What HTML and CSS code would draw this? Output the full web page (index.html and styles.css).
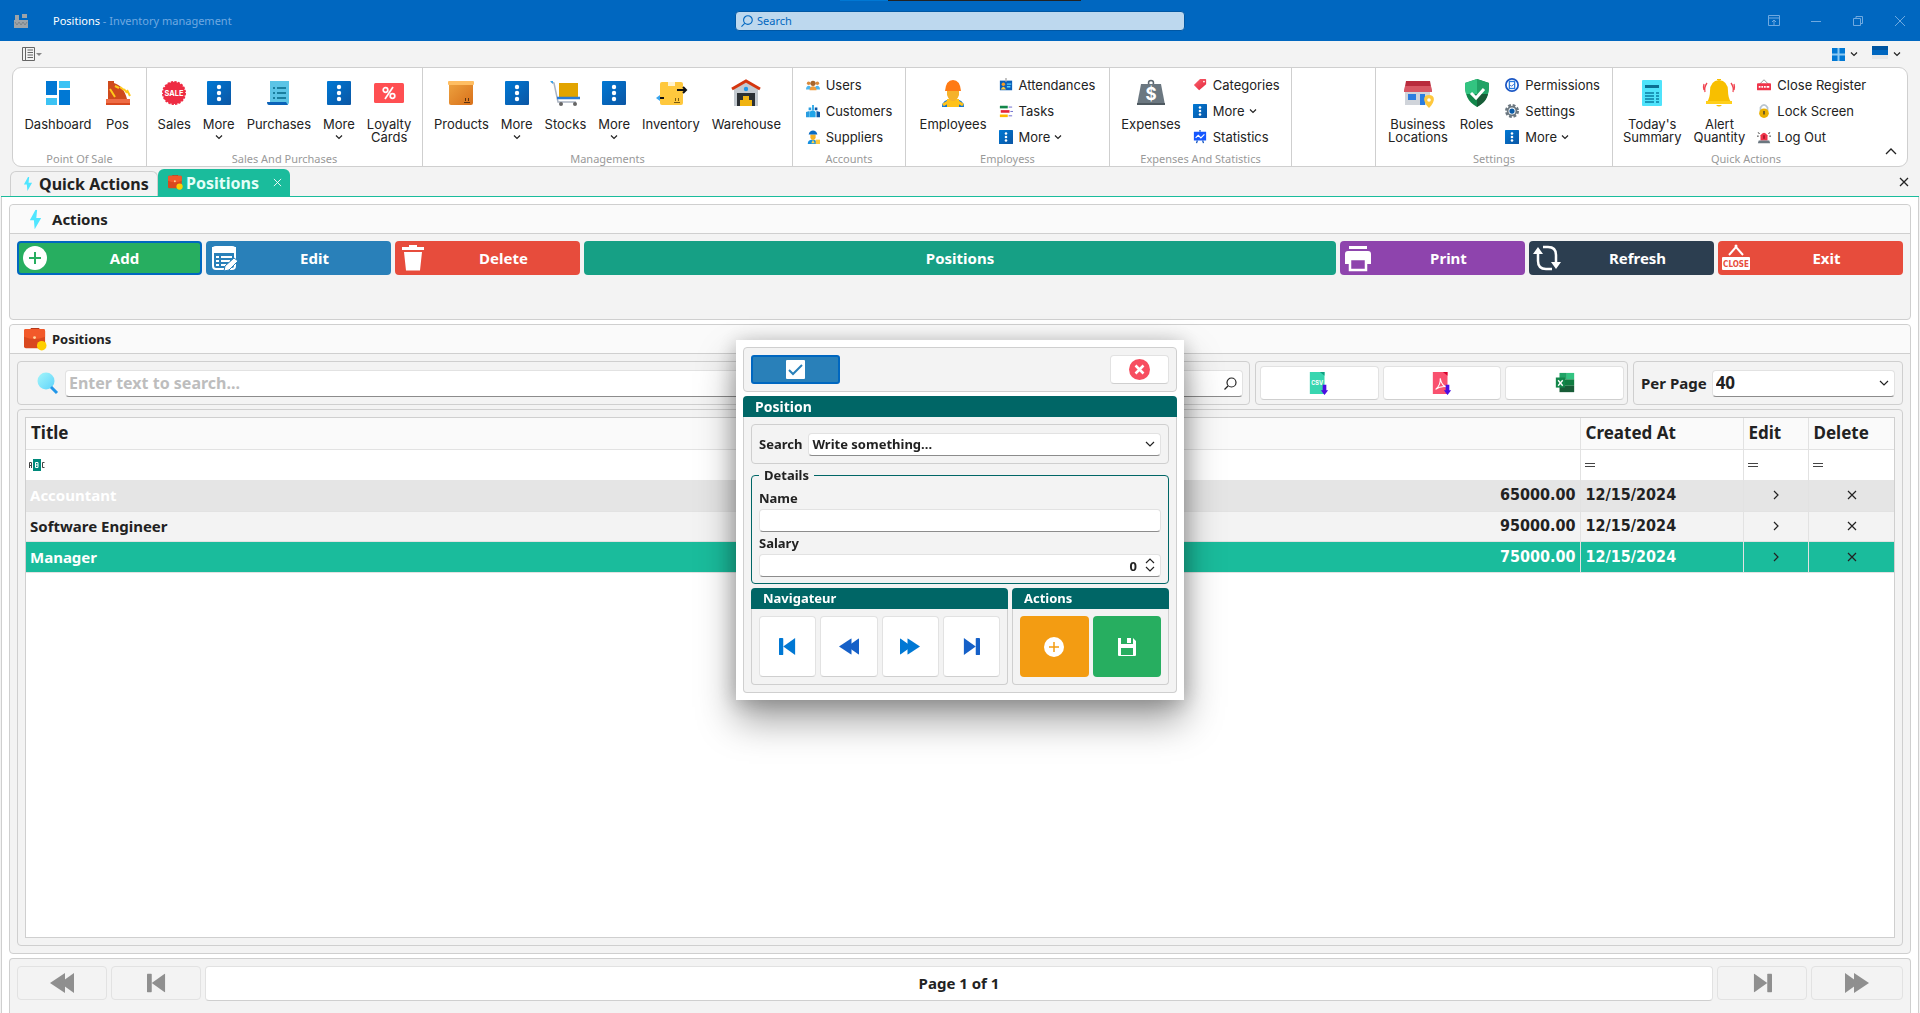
FILE: index.html
```html
<!DOCTYPE html>
<html lang="en">
<head>
<meta charset="utf-8">
<title>Positions - Inventory management</title>
<link rel="stylesheet" href="styles.css">
</head>
<body>
<svg class="defs" aria-hidden="true">
  <defs>
    <linearGradient id="gBlue" x1="0" y1="0" x2="1" y2="1"><stop offset="0" stop-color="#0078d4"/><stop offset="1" stop-color="#0b56a4"/></linearGradient>
    <linearGradient id="gBox" x1="0" y1="0" x2="1" y2="1"><stop offset="0" stop-color="#eda23f"/><stop offset="1" stop-color="#d8701a"/></linearGradient>
    <linearGradient id="gLens" x1="0" y1="0" x2="1" y2="1"><stop offset="0" stop-color="#a5f6fa"/><stop offset="1" stop-color="#5fd3fb"/></linearGradient>
    <linearGradient id="gTag" x1="0" y1="0" x2="1" y2="1"><stop offset="0" stop-color="#f9656f"/><stop offset="1" stop-color="#e5233a"/></linearGradient>
  </defs>
  <symbol id="more" viewBox="0 0 24 24"><rect width="24" height="24" rx="1" fill="url(#gBlue)"/><g fill="#fff"><circle cx="12" cy="6" r="2.2"/><circle cx="12" cy="12" r="2.2"/><circle cx="12" cy="18" r="2.2"/></g></symbol>
  <symbol id="chev" viewBox="0 0 8 6"><path d="M1 1.5l3 3 3-3" fill="none" stroke="#222" stroke-width="1.2"/></symbol>
  <symbol id="bolt" viewBox="0 0 16 24"><path d="M8 0L1 13h5l1 11 8-14H9l1-10z" fill="#50e6ff"/></symbol>
  <symbol id="case" viewBox="0 0 24 24"><path d="M8 2V0h7v2" fill="none" stroke="#b5381a" stroke-width="2"/><rect y="1" width="22" height="20" rx="2" fill="#d9481f"/><path d="M0 3q0-2 2-2h18q2 0 2 2v6q-11 5-22 0z" fill="#f2592a"/><circle cx="11" cy="10" r="1.5" fill="#ffd9a0"/><circle cx="18.500" cy="18.500" r="5" fill="#ffcf00"/></symbol>
  <symbol id="first" viewBox="0 0 20 20"><rect y="0" width="5" height="20" rx="1"/><path d="M19 0v20L5 10z" stroke-width="1" stroke-linejoin="round"/></symbol>
  <symbol id="back" viewBox="0 0 24 20"><path d="M15 0v20L0 10z"/><path d="M24 0v20L10 10z"/></symbol>
</svg>

<header class="titlebar">
  <svg class="app-icon" viewBox="0 0 14 14"><path d="M0 6h14v8H0zM1 1h4v5H1zM8 0h5v4H8z" fill="#9da3a8"/><path d="M1 8l2 3 2-3 2 3 2-3 2 3 2-3" fill="none" stroke="#7c858c"/></svg>
  <div class="win-title"><b>Positions</b> - Inventory management</div>
  <label class="top-search">
    <svg viewBox="0 0 13 13"><circle cx="7.500" cy="5.500" r="4.700" fill="none" stroke="#0067c0" stroke-width="1.200"/><path d="M4 9L.5 12.500" stroke="#0067c0" stroke-width="1.200"/></svg>
    <input type="text" placeholder="Search" aria-label="Search">
  </label>
  <div class="win-buttons">
    <button aria-label="Pin"><svg viewBox="0 0 12 12"><path d="M.5.5h11v10H.5zM.5 3h11M6 10V5M4 7l2-2 2 2"/></svg></button>
    <button aria-label="Minimize"><svg viewBox="0 0 12 12"><path d="M1 6.500h10"/></svg></button>
    <button aria-label="Restore"><svg viewBox="0 0 12 12"><path d="M1.500 3.500h7v7h-7zM4 3.500v-2h6.500v7h-2"/></svg></button>
    <button aria-label="Close"><svg viewBox="0 0 12 12"><path d="M1 1l10 10M11 1L1 11"/></svg></button>
  </div>
  <div class="screen-strip"></div>
</header>

<div class="quickbar">
  <button aria-label="Toolbar options"><svg width="20" height="14" viewBox="0 0 20 14"><path d="M.5.5h12v13H.5zM3.500.5v13M5.500 3h5.500M5.500 5.500h5.500M5.500 8h5.500M5.500 10.500h5.500" fill="none" stroke="#666"/><path d="M14 6h6l-3 3z" fill="#888"/></svg></button>
  <div class="quick-right">
    <button aria-label="Layout"><svg width="13" height="13" viewBox="0 0 13 13"><path d="M0 0h13v13H0z" fill="#0078d4"/><path d="M6.500 0v13M0 6.500h13" stroke="#8cc9f2" stroke-width="2"/></svg><svg width="8" height="6"><use href="#chev"/></svg></button>
    <button aria-label="Theme"><svg class="raised" width="16" height="13" viewBox="0 0 16 13"><path d="M0 0h16v5H0z" fill="#0054a0"/><path d="M0 4h16v5H0z" fill="#0067c0"/><path d="M0 9h16v4H0z" fill="#e8e8e8"/></svg><svg width="8" height="6"><use href="#chev"/></svg></button>
  </div>
</div>

<nav class="ribbon">
  <section class="group g-pos"><div class="tools">
    <button class="big"><svg viewBox="0 0 24 24"><path d="M0 0h11v14H0zM13 9h11v15H13z" fill="#0078d4"/><path d="M13 0h11v7H13zM0 17h11v7H0z" fill="#3cc3f4"/></svg>Dashboard</button>
    <button class="big"><svg viewBox="0 0 24 24"><path d="M2 0h6v2c7 2 11 8 13 16H2z" fill="#cf4a1c"/><rect y="18" width="24" height="6" fill="#ee6c45"/><path d="M0 22h24v2H0z" fill="#d9481f"/><path d="M4 8l5 8M9 5l4 2m1-1l4 3m0-1l3 4m0-3l3 6" stroke="#ffca1a" stroke-width="2"/></svg>Pos</button>
  </div><h2>Point Of Sale</h2></section>

  <section class="group g-sales"><div class="tools">
    <button class="big"><svg viewBox="0 0 26 26"><circle cx="13" cy="13" r="12" fill="#ee2c43" stroke="#ee2c43" stroke-width="2" stroke-dasharray="2.500 1.270"/><text x="13" y="16" text-anchor="middle" class="sale-text">SALE</text></svg>Sales</button>
    <button class="big"><svg><use href="#more"/></svg>More<svg class="chev"><use href="#chev"/></svg></button>
    <button class="big"><svg viewBox="0 0 24 24"><path d="M3 0h19v21q0 3-3 3H5q-2 0-2-3z" fill="#5cc4e6"/><path d="M0 21h19l2 3H2q-2 0-2-3z" fill="#0b62b8"/><path d="M6 7h2m2 0h9M6 12h2m2 0h9M6 17h2m2 0h9" stroke="#1b7f9f" stroke-width="2"/></svg>Purchases</button>
    <button class="big"><svg><use href="#more"/></svg>More<svg class="chev"><use href="#chev"/></svg></button>
    <button class="big"><svg viewBox="0 0 24 24" class="wide"><rect x="-3" y="2" width="30" height="20" rx="1.500" fill="#ff4f52"/><g fill="none" stroke="#fff" stroke-width="1.700"><circle cx="8.500" cy="9" r="2.300"/><circle cx="15.500" cy="15" r="2.300"/><path d="M16 6L8 18"/></g></svg>Loyalty<br>Cards</button>
  </div><h2>Sales And Purchases</h2></section>

  <section class="group g-manage"><div class="tools">
    <button class="big"><svg viewBox="0 0 24 24"><path d="M0 2h24v20q0 2-2 2H2q-2 0-2-2z" fill="url(#gBox)"/><rect x="-1" width="26" height="4" rx="1" fill="#ffbe62"/><path d="M15 21.500h6M16.500 20v-3M19.500 20v-3" stroke="#5b3210"/></svg>Products</button>
    <button class="big"><svg><use href="#more"/></svg>More<svg class="chev"><use href="#chev"/></svg></button>
    <button class="big"><svg class="wide" viewBox="0 0 24 24"><path d="M-2 1l3 1 4 19h18" fill="none" stroke="#aab4c2" stroke-width="1.500"/><path d="M-3 0h3v3z" fill="#3aa5ee"/><rect x="6" y="2" width="19" height="14" fill="#e2a400"/><path d="M4 17h23" stroke="#2b7bd6" stroke-width="2.500"/><circle cx="8" cy="23" r="2" fill="#666"/><circle cx="22" cy="23" r="2" fill="#666"/></svg>Stocks</button>
    <button class="big"><svg><use href="#more"/></svg>More<svg class="chev"><use href="#chev"/></svg></button>
    <button class="big"><svg class="wide" viewBox="0 0 24 24"><rect x="1" y="1" width="23" height="23" rx="2" fill="#ffc83d"/><rect x="9" y="1" width="7" height="4" fill="#fff3d0"/><path d="M15 21.500h6M16.500 20v-3M19.500 20v-3" stroke="#7a5a10"/><path d="M18 9h9m-3-3l3 3-3 3M5 17h-5" fill="none" stroke="#111" stroke-width="2"/><path d="M1 14l-4 3 4 3z" fill="#3aa5ee"/></svg>Inventory</button>
    <button class="big"><svg class="wide" viewBox="0 0 24 24"><path d="M0 8l12-7 12 7v17H0z" fill="#c3c9cf"/><path d="M3 12h18v13H3z" fill="#2b3034"/><path d="M-2 8l14-8 14 8" fill="none" stroke="#d5360f" stroke-width="3"/><circle cx="12" cy="8" r="2.200" fill="#2196e8"/><path d="M9 15h6v4h3v6H6v-6h3z" fill="#f0b310"/></svg>Warehouse</button>
  </div><h2>Managements</h2></section>

  <section class="group g-accounts"><div class="tools"><div class="stack">
    <button class="small"><svg viewBox="0 0 16 16"><circle cx="3" cy="6" r="2" fill="#d98a3d"/><circle cx="13" cy="6" r="2" fill="#d98a3d"/><path d="M0 13c0-6 6-5 6-1h4c0-4 6-5 6 1z" fill="#4db6ee"/><circle cx="8" cy="6" r="3" fill="#a8652b"/><path d="M4 14c0-6 8-6 8 0z" fill="#ef9b3c"/></svg>Users</button>
    <button class="small"><svg viewBox="0 0 16 16"><path d="M0 15V9l4-1v7zM3 4h3v3H3z" fill="#2a9de0"/><path d="M16 15V9l-4-1v7zM10 4h3v3h-3z" fill="#0b56a4"/><path d="M4 15V9q4-3 7 0v6zM7 1h2v6H7z" fill="#20a4e8"/></svg>Customers</button>
    <button class="small"><svg viewBox="0 0 16 16"><path d="M2 16c0-5 4-5 6-5s5 1 5 5z" fill="#168fe0"/><path d="M5 5h6v4q-3 5-6 0z" fill="#f7b223"/><path d="M3 5c1-6 9-6 10 0z" fill="#0a6cc4"/><path d="M8 11l-2 4h4z" fill="#ffd54a"/><path d="M11 11h5v5h-5z" fill="#ffc83d"/></svg>Suppliers</button>
  </div></div><h2>Accounts</h2></section>

  <section class="group g-employees"><div class="tools">
    <button class="big"><svg viewBox="0 0 24 24" class="wide"><path d="M1 26q0-8 11-8t11 8z" fill="#1275cc"/><path d="M6 18h12v8H6z" fill="#ffc21a"/><path d="M6 9h12v5q-2 6-6 6t-6-6z" fill="#f5b22b"/><path d="M4 10Q5-1 12-1t8 11z" fill="#ff7a14"/><path d="M2 24l5-3m15 3l-5-3" stroke="#ffc21a" stroke-width="3"/></svg>Employees</button>
    <div class="stack">
    <button class="small"><svg viewBox="0 0 16 16"><rect x="1" y="3" width="14" height="11" fill="#0b5fb8"/><rect x="7" y="0" width="2" height="4" fill="#bbb"/><circle cx="5" cy="7" r="2" fill="#f59a23"/><path d="M2 13q3-6 6 0z" fill="#ffc83d"/><path d="M9 7h5M9 10h4" stroke="#5bd1ff" stroke-width="1.500"/></svg>Attendances</button>
    <button class="small"><svg viewBox="0 0 16 16"><path d="M1 2h9v3H1z" fill="#12864a"/><path d="M2 7h10v3H2z" fill="#e5233a"/><path d="M1 12h9v3H1z" fill="#ffb900"/><path d="M11 3.500h4M13 8.500h3M11 13.500h4" stroke="#5b5bc8"/></svg>Tasks</button>
    <button class="small"><svg><use href="#more"/></svg>More<svg class="chev"><use href="#chev"/></svg></button>
  </div></div><h2>Employess</h2></section>

  <section class="group g-expenses"><div class="tools">
    <button class="big"><svg viewBox="0 0 24 24" class="wide"><circle cx="12" cy="2" r="2.500" fill="none" stroke="#5c6770" stroke-width="1.500"/><path d="M2 3h20l4 21H-2z" fill="#6b7780"/><path d="M-2 22h28v2H-2z" fill="#4e5960"/><text x="12" y="19" text-anchor="middle" class="coin-text">$</text></svg>Expenses</button>
    <div class="stack">
    <button class="small"><svg viewBox="0 0 16 16"><path d="M8 1h6q1 0 1 1v5l-8 7-6-6z" fill="url(#gTag)"/><circle cx="12.500" cy="4" r="1" fill="#fff"/></svg>Categories</button>
    <button class="small"><svg><use href="#more"/></svg>More<svg class="chev"><use href="#chev"/></svg></button>
    <button class="small"><svg viewBox="0 0 16 16"><path d="M1 2h14v10H1z" fill="#1557ff"/><path d="M3 9l3-3 3 3 4-4" fill="none" stroke="#fff" stroke-width="1.300"/><path d="M8 0v2M5 12l-1 3M11 12l1 3" stroke="#1557c0" stroke-width="1.500"/></svg>Statistics</button>
  </div></div><h2>Expenses And Statistics</h2></section>

  <section class="group g-spare"></section>

  <section class="group g-settings"><div class="tools">
    <button class="big"><svg viewBox="0 0 24 24" class="wide"><path d="M-1 11h25v13H-1z" fill="#d0d4da"/><path d="M0 0h24l2 11H-2z" fill="#b92b3d"/><path d="M-1 5h26l1 6H-2z" fill="#d85764"/><path d="M2 13h8v6H2zM14 13h5v11h-5z" fill="#2b7de0"/><path d="M23 14c6 0 7 6 0 13-7-7-6-13 0-13z" fill="#ffc83d"/><circle cx="23" cy="19" r="1.800" fill="#fff"/></svg>Business<br>Locations</button>
    <button class="big"><svg viewBox="0 0 24 24" class="wide"><path d="M12-2l12 4c0 12-2 18-12 24C2 20 0 14 0 2z" fill="#12864a"/><path d="M12-2v15H1C0 9 0 6 0 2z" fill="#33c481"/><path d="M12-2l12 4c0 4 0 8-1 11H12z" fill="#21a366"/><path d="M12 13h11c-1 5-4 9-11 13z" fill="#185c37"/><path d="M6 12l5 5 8-9" fill="none" stroke="#fff" stroke-width="3"/></svg>Roles</button>
    <div class="stack">
    <button class="small"><svg viewBox="0 0 16 16"><circle cx="8" cy="8" r="7" fill="#fff" stroke="#1a56c4" stroke-width="2"/><rect x="5" y="4" width="6" height="8" fill="none" stroke="#2b7de0" stroke-width="1.500"/><path d="M6 8l1.500 1.500L10 7" fill="none" stroke="#1a56c4"/></svg>Permissions</button>
    <button class="small"><svg viewBox="0 0 16 16"><circle cx="8" cy="8" r="6.500" fill="none" stroke="#6b7780" stroke-width="3" stroke-dasharray="3.100 2"/><circle cx="8" cy="8" r="5" fill="#fff" stroke="#6b7780" stroke-width="2"/><circle cx="8" cy="8" r="3" fill="#0a5ca8"/></svg>Settings</button>
    <button class="small"><svg><use href="#more"/></svg>More<svg class="chev"><use href="#chev"/></svg></button>
  </div></div><h2>Settings</h2></section>

  <section class="group g-quick"><div class="tools">
    <button class="big"><svg viewBox="0 0 24 24" class="wide"><rect x="2" y="-1" width="20" height="26" rx="1" fill="#4fe3fb"/><path d="M5 5.500h14" stroke="#0b6f93" stroke-width="3"/><path d="M5 12h9m2 0h3M5 15h9m2 0h3M5 18h9m2 0h3M5 21h9m2 0h3" stroke="#0b7fa5" stroke-width="1.300"/></svg>Today's<br>Summary</button>
    <button class="big"><svg viewBox="0 0 24 24" class="wide"><path d="M0 21Q3 17 3 10 3 0 12-1q9 1 9 11 0 7 3 11z" fill="#f8bf00"/><path d="M-1 20h26v3H-1z" fill="#ffcf1a"/><path d="M10-1h4v-1h-4zM9 24h6q-3 3-6 0z" fill="#f8bf00"/><path d="M0 2q-3 4-2 9M-3 3q-1 3 0 6M24 2q3 4 2 9M27 3q1 3 0 6" fill="none" stroke="#f04450" stroke-width="1.300"/></svg>Alert<br>Quantity</button>
    <div class="stack">
    <button class="small"><svg viewBox="0 0 16 16"><path d="M3 7l5-5 5 5" fill="none" stroke="#888"/><rect x="0" y="6" width="16" height="8" rx="1" fill="#f0344a"/><path d="M2 10h2m1 0h2m1 0h2m1 0h3" stroke="#fff" stroke-width="2"/></svg>Close Register</button>
    <button class="small"><svg viewBox="0 0 16 16"><path d="M4 8V4q4-6 8 0v4" fill="none" stroke="#b8c4cf" stroke-width="2"/><circle cx="8" cy="10.500" r="5.500" fill="#eab000"/><path d="M8 8v4" stroke="#333" stroke-width="1.500"/></svg>Lock Screen</button>
    <button class="small"><svg viewBox="0 0 16 16"><path d="M4 12V6q4-6 8 0v6z" fill="#f0344a"/><path d="M8 6v4" stroke="#8a1020" stroke-width="1.500"/><path d="M2 12h12l1 3H1z" fill="#6b7780"/><path d="M1 3l2 1M0 7h2M15 3l-2 1M16 7h-2" stroke="#222"/></svg>Log Out</button>
  </div></div><h2>Quick Actions</h2>
  <button class="collapse" aria-label="Collapse ribbon"><svg viewBox="0 0 12 8"><path d="M1 7l5-5 5 5" fill="none" stroke="#222" stroke-width="1.300"/></svg></button></section>
</nav>

<div class="tabs">
  <a class="tab" href="#quick"><svg viewBox="0 0 16 24"><use href="#bolt"/></svg>Quick Actions</a>
  <a class="tab active" href="#positions"><svg class="case" viewBox="0 0 24 24"><use href="#case"/></svg>Positions<svg class="x" viewBox="0 0 10 10"><path d="M1 1l8 8M9 1L1 9" stroke="#fff"/></svg></a>
  <button class="tabs-close" aria-label="Close tab"><svg viewBox="0 0 10 10"><path d="M1 1l8 8M9 1L1 9" stroke="#222" stroke-width="1.300"/></svg></button>
</div>

<main class="page">
  <section class="panel actions-panel">
    <h1 class="panel-head actions-title"><svg class="bolt" viewBox="0 0 16 24"><use href="#bolt"/></svg>Actions</h1>
    <div class="action-row">
      <button class="act add"><svg viewBox="0 0 28 28"><circle cx="14" cy="14" r="12" fill="#fff"/><path d="M14 8v12M8 14h12" stroke="#27ae60" stroke-width="2"/></svg><span>Add</span></button>
      <button class="act edit"><svg viewBox="0 0 28 28"><rect x="3" y="3" width="22" height="22" rx="3" fill="none" stroke="#fff" stroke-width="2"/><path d="M2 3h24v6H2z" fill="#fff"/><path d="M6 13h3m2 0h11M6 17h3m2 0h9M6 21h3m2 0h5" stroke="#fff" stroke-width="2"/><path d="M14 27l1-5 9-8 4 3-9 9z" fill="#fff" stroke="#2980b9"/></svg><span>Edit</span></button>
      <button class="act delete"><svg viewBox="0 0 28 28"><path d="M5 8h18l-2 18.500H7zM3 3h7V1h8v2h7v3H3z" fill="#fff"/></svg><span>Delete</span></button>
      <button class="act current"><span>Positions</span></button>
      <button class="act print"><svg viewBox="0 0 28 28"><path d="M5 2h18v3H5zM4 7h20q3 0 3 3v10h-4v-6H5v6H1V10q0-3 3-3z" fill="#fff"/><rect x="6" y="15" width="16" height="11" fill="none" stroke="#fff" stroke-width="2.500"/></svg><span>Print</span></button>
      <button class="act refresh"><svg viewBox="0 0 28 28"><path d="M19 25h-6Q5 25 5 17V9M10 3h5q8 0 8 8v8" fill="none" stroke="#fff" stroke-width="2.500"/><path d="M0 10l5-7 5 7zM18 18h10l-5 7z" fill="#fff"/></svg><span>Refresh</span></button>
      <button class="act exit"><svg viewBox="0 0 28 28"><path d="M7 11l7-8 7 8" fill="none" stroke="#fff" stroke-width="2"/><circle cx="14" cy="2" r="1.500" fill="#fff"/><rect y="13" width="28" height="13" rx="1" fill="#fff"/><text x="14" y="23" text-anchor="middle" class="close-text">CLOSE</text></svg><span>Exit</span></button>
    </div>
  </section>

  <section class="panel list-panel">
    <h2 class="panel-head"><svg class="case" viewBox="0 0 24 24"><use href="#case"/></svg>Positions</h2>
    <div class="list-body">
      <div class="filters">
        <div class="box searchbox">
          <svg viewBox="0 0 22 22"><circle cx="9" cy="9" r="8.500" fill="url(#gLens)"/><path d="M14 15l6 6" stroke="#2196e8" stroke-width="3"/></svg>
          <input class="field" type="text" placeholder="Enter text to search..." aria-label="Search positions">
          <svg class="glass" viewBox="0 0 13 13"><circle cx="7.500" cy="5.500" r="4.500" fill="none" stroke="#222" stroke-width="1.200"/><path d="M4 9L.5 12.500" stroke="#222" stroke-width="1.200"/></svg>
        </div>
        <div class="box exports">
          <button class="white" aria-label="Export CSV"><svg viewBox="0 0 24 24"><path d="M2 0h16v24H2z" fill="#38d6b0"/><path d="M13 0h5v4z" fill="#0f9f80"/><text x="10" y="14" text-anchor="middle" class="csv-text">CSV</text><path d="M16 14h4v6h2l-4 5-4-5h2z" fill="#4b0ee0"/></svg></button>
          <button class="white" aria-label="Export PDF"><svg viewBox="0 0 24 24"><path d="M2 0h16v24H2z" fill="#f9516f"/><path d="M13 0h5v4z" fill="#d8002c"/><path d="M5 19q6-5 5-12 2 9 7 9-7-1-12 3z" fill="none" stroke="#fff" stroke-width="1.200"/><path d="M16 14h4v6h2l-4 5-4-5h2z" fill="#4b0ee0"/></svg></button>
          <button class="white" aria-label="Export Excel"><svg viewBox="0 0 24 24"><path d="M6 1h8v7H6z" fill="#21a366"/><path d="M14 1h8v7h-8z" fill="#33c481"/><path d="M6 8h16v7H6z" fill="#107c41"/><path d="M6 15h16v7H6z" fill="#185c37"/><path d="M2 6h10v11H2z" fill="#12864a"/><path d="M4.500 9l5 6m0-6l-5 6" stroke="#fff" stroke-width="1.500"/></svg></button>
        </div>
        <div class="box perpage">
          <label for="pp">Per Page</label>
          <div class="select"><select class="field" id="pp"><option>40</option></select><svg viewBox="0 0 10 7"><path d="M1 1l4 4 4-4" fill="none" stroke="#222" stroke-width="1.200"/></svg></div>
        </div>
      </div>
      <div class="box grid-box">
        <div class="grid">
          <table>
            <colgroup><col><col><col class="c-date"><col class="c-edit"><col class="c-del"></colgroup>
            <thead><tr><th>Title</th><th></th><th>Created At</th><th>Edit</th><th>Delete</th></tr></thead>
            <tbody>
              <tr class="filter"><td><svg width="16" height="12" viewBox="0 0 16 12"><rect x="4" width="8" height="12" fill="#00897b"/><path d="M.5 9V3.500h2V9M.5 6.500h2M15.500 3.500h-2v5h2" fill="none" stroke="#444"/><path d="M6.500 3.500h2.500v5H6.500zM6.500 6h2.500" fill="none" stroke="#fff"/></svg></td><td></td><td><i></i></td><td><i></i></td><td><i></i></td></tr>
              <tr class="focused"><td>Accountant</td><td class="num">65000.00</td><td class="date">12/15/2024</td><td class="cmd"><button aria-label="Edit"><svg class="go"><path d="M1 1l4 4-4 4"/></svg></button></td><td class="cmd"><button aria-label="Delete"><svg><path d="M1 1l8 8M9 1L1 9"/></svg></button></td></tr>
              <tr class="alt"><td>Software Engineer</td><td class="num">95000.00</td><td class="date">12/15/2024</td><td class="cmd"><button aria-label="Edit"><svg class="go"><path d="M1 1l4 4-4 4"/></svg></button></td><td class="cmd"><button aria-label="Delete"><svg><path d="M1 1l8 8M9 1L1 9"/></svg></button></td></tr>
              <tr class="selected"><td>Manager</td><td class="num">75000.00</td><td class="date">12/15/2024</td><td class="cmd"><button aria-label="Edit"><svg class="go"><path d="M1 1l4 4-4 4"/></svg></button></td><td class="cmd"><button aria-label="Delete"><svg><path d="M1 1l8 8M9 1L1 9"/></svg></button></td></tr>
            </tbody>
          </table>
        </div>
      </div>
    </div>
  </section>

  <footer class="panel pager">
    <button disabled aria-label="First page"><svg class="w24" viewBox="0 0 24 20"><use href="#back"/></svg></button>
    <button disabled aria-label="Previous page"><svg viewBox="0 0 20 20"><use href="#first"/></svg></button>
    <output>Page 1 of 1</output>
    <button disabled aria-label="Next page"><svg class="flip" viewBox="0 0 20 20"><use href="#first"/></svg></button>
    <button disabled aria-label="Last page"><svg class="w24 flip" viewBox="0 0 24 20"><use href="#back"/></svg></button>
  </footer>
</main>

<dialog open class="modal" aria-label="Position">
  <div class="box modal-top">
    <button class="ok" aria-label="Confirm"><svg viewBox="0 0 19 19"><rect width="19" height="19" rx="1" fill="#fff"/><path d="M3 10l4 4 9-9" fill="none" stroke="#2980b9" stroke-width="2"/></svg></button>
    <button class="white cancel" aria-label="Close"><svg viewBox="0 0 21 21"><circle cx="10.500" cy="10.500" r="10.500" fill="#f74e60"/><path d="M6.500 6.500l8 8m0-8l-8 8" stroke="#fff" stroke-width="2.500"/></svg></button>
  </div>
  <section class="card">
    <h2 class="big-head">Position</h2>
    <div class="card-body">
      <div class="box lookup">
        <label for="ws">Search</label>
        <div class="select"><select class="field" id="ws"><option>Write something...</option></select><svg viewBox="0 0 10 7"><path d="M1 1l4 4 4-4" fill="none" stroke="#222" stroke-width="1.200"/></svg></div>
      </div>
      <fieldset>
        <legend>Details</legend>
        <label for="nm">Name</label>
        <input class="field" id="nm" type="text">
        <label for="sl">Salary</label>
        <div class="select"><input class="field salary" id="sl" type="text" value="0"><svg class="spin" viewBox="0 0 10 14"><path d="M1 5l4-4 4 4M1 9l4 4 4-4" fill="none" stroke="#222" stroke-width="1.200"/></svg></div>
      </fieldset>
      <div class="bottom">
        <section class="card nav">
          <h3>Navigateur</h3>
          <div class="card-body row">
            <button class="white" aria-label="First"><svg viewBox="0 0 20 20"><use href="#first"/></svg></button>
            <button class="white dark" aria-label="Previous"><svg class="w24" viewBox="0 0 24 20"><use href="#back"/></svg></button>
            <button class="white" aria-label="Next"><svg class="w24 flip" viewBox="0 0 24 20"><use href="#back"/></svg></button>
            <button class="white dark" aria-label="Last"><svg class="flip" viewBox="0 0 20 20"><use href="#first"/></svg></button>
          </div>
        </section>
        <section class="card acts">
          <h3>Actions</h3>
          <div class="card-body row">
            <button class="new" aria-label="New"><svg viewBox="0 0 20 20"><circle cx="10" cy="10" r="10" fill="#fff"/><path d="M10 5v10M5 10h10" stroke="#f39c12" stroke-width="1.500"/></svg></button>
            <button class="save" aria-label="Save"><svg viewBox="0 0 20 20"><path d="M1 1h3v6h12V1l3 3v14q0 1-1 1H2q-1 0-1-1z" fill="#fff"/><path d="M10 1h4v5h-4z" fill="#fff"/><path d="M4 11h12v7H4z" fill="#27ae60"/></svg></button>
          </div>
        </section>
      </div>
    </div>
  </section>
</dialog>
</body>
</html>
```
FILE: styles.css
```css
* { box-sizing: border-box; }
html, body { height: 100%; }
body {
  margin: 0;
  display: flex;
  flex-direction: column;
  background: #f3f3f3;
  color: #222;
  font: bold 16px/20px "Noto Sans", sans-serif;
  overflow: hidden;
}
button, input, select { font: inherit; color: inherit; margin: 0; }
button { padding: 0; border: 0; background: none; }
h1, h2, h3 { margin: 0; font-size: inherit; }
svg { display: block; flex: none; overflow: visible; }
.defs { position: absolute; width: 0; height: 0; }

/* Title bar */
.titlebar {
  position: relative;
  flex: none;
  height: 41px;
  display: grid;
  grid-template-columns: 1fr 450px 1fr;
  align-items: center;
  background: #0067c0;
  font: 11px/14px "Noto Sans", sans-serif;
}
.app-icon { position: absolute; left: 14px; top: 14px; width: 14px; height: 14px; }
.win-title { padding-left: 53px; color: #6fa9e0; }
.win-title b { color: #fff; font-weight: normal; }
.top-search {
  display: flex;
  align-items: center;
  gap: 4px;
  height: 20px;
  padding-left: 5px;
  border: 1px solid #0057a3;
  border-radius: 4px;
  background: #bdd8ee;
}
.top-search svg { width: 12px; height: 12px; }
.top-search input { flex: 1; border: 0; outline: 0; background: none; padding: 0; }
.top-search input::placeholder { color: #0067c0; opacity: 1; }
.win-buttons { display: flex; justify-content: flex-end; gap: 30px; padding-right: 14px; }
.win-buttons svg { width: 12px; height: 12px; fill: none; stroke: #6fa9e0; }
.screen-strip {
  position: absolute;
  top: 0;
  left: 50%;
  width: 241px;
  height: 1px;
  margin-left: -120px;
  background: linear-gradient(90deg, #0078d4 48px, #222 48px);
}

/* Quick access row */
.quickbar {
  flex: none;
  height: 26px;
  display: flex;
  justify-content: space-between;
  align-items: center;
  padding: 0 19px 0 22px;
}
.quick-right { display: flex; gap: 14px; }
.quick-right button { display: flex; align-items: center; gap: 5px; }
.raised { margin-bottom: 4px; }

/* Ribbon */
.ribbon {
  flex: none;
  display: flex;
  height: 100px;
  margin: 0 12px;
  border: 1px solid #cfcfcf;
  border-radius: 9px;
  background: #fff;
  font: 13px/13px Inter, sans-serif;
}
.group {
  position: relative;
  display: flex;
  flex-direction: column;
  justify-content: space-between;
  border-right: 1px solid #cfcfcf;
}
.g-pos { width: 134px; }
.g-sales { width: 276px; }
.g-manage { width: 370px; }
.g-accounts { width: 113px; }
.g-employees { width: 204px; }
.g-expenses { width: 182px; }
.g-spare { width: 84px; }
.g-settings { width: 237px; }
.g-quick { flex: 1; border-right: 0; }
.group h2 {
  text-align: center;
  color: #999;
  font: 11px/14px "Noto Sans", sans-serif;
}
.g-quick h2 { padding-right: 28px; }
.tools { display: flex; justify-content: center; gap: 12px; padding-top: 13px; }
.g-pos .tools { gap: 14px; padding-right: 5px; }
.g-quick .tools { justify-content: flex-start; padding-left: 10px; }
.big { display: flex; flex-direction: column; align-items: center; height: 68px; line-height: 13px; }
.big > svg:first-child { width: 24px; height: 24px; margin-bottom: 13px; }
.big .chev { width: 8px; height: 6px; margin-top: 3px; }
.stack { display: flex; flex-direction: column; margin-top: -9px; }
.small { display: flex; align-items: center; height: 26px; white-space: nowrap; }
.small > svg:first-child { width: 14px; height: 14px; margin-right: 6px; }
.small .chev { width: 8px; height: 6px; margin-left: 4px; }
.sale-text { font: bold 8px Inter, sans-serif; fill: #fff; }
.coin-text { font: bold 17px Inter, sans-serif; fill: #fff; }
.collapse { position: absolute; right: 10px; bottom: 11px; }
.collapse svg { width: 12px; height: 8px; }

/* Tabs */
.tabs {
  flex: none;
  display: flex;
  align-items: flex-end;
  height: 30px;
  margin: 0 1px;
  padding: 0 10px 0 9px;
  border-bottom: 1px solid #1abc9c;
}
.tab {
  display: flex;
  align-items: center;
  height: 25px;
  width: 148px;
  padding-left: 12px;
  gap: 6px;
  border: 1px solid #cfcfcf;
  border-bottom: 0;
  border-radius: 6px 6px 0 0;
  color: #222;
  text-decoration: none;
  white-space: nowrap;
}
.tab svg { width: 10px; height: 14px; }
.tab.active { width: 132px; height: 27px; padding-left: 10px; gap: 3px; border: 0; background: #1abc9c; color: #e4fff8; }
.tab.active .case { width: 15px; height: 15px; }
.tab.active .x { width: 9px; height: 9px; margin: 0 8px 0 auto; }
.tabs-close { margin: 0 0 9px auto; }
.tabs-close svg { width: 10px; height: 10px; }

/* Page and panels */
.page {
  flex: 1;
  display: flex;
  flex-direction: column;
  gap: 4px;
  margin: 0 1px;
  padding: 7px 7px 0;
  border: 1px solid #cfcfcf;
  border-width: 0 1px;
  background: #fff;
}
.panel { flex: none; border: 1px solid #cfcfcf; border-radius: 4px; background: #f3f3f3; }
.panel-head {
  display: flex;
  align-items: center;
  gap: 5px;
  height: 29px;
  padding-left: 14px;
  border-bottom: 1px solid #cfcfcf;
  background: #fafafa;
  border-radius: 4px 4px 0 0;
  font-size: 13px;
}
.panel-head .case { width: 23px; height: 23px; }
.panel-head .bolt { width: 13px; height: 23px; margin: 0 5px; }
.actions-title { font-size: 15px; }
.actions-panel { height: 116px; }
.action-row { display: flex; gap: 4px; padding: 7px; }
.act {
  display: flex;
  align-items: center;
  width: 185px;
  height: 34px;
  padding-left: 4px;
  border-radius: 4px;
  color: #fff;
  font-size: 15px;
}
.act svg { width: 28px; height: 28px; }
.act span { flex: 1; text-align: center; }
.add { background: #27ae60; border: 2px solid #0067c0; padding-left: 2px; }
.edit { background: #2980b9; }
.delete, .exit { background: #e74c3c; }
.current { flex: 1; background: #16a085; padding: 0; }
.print { background: #8e44ad; }
.refresh { background: #2c3e50; }
.close-text { font: bold 8px "DejaVu Sans Condensed", sans-serif; fill: #e74c3c; }

.list-panel { flex: 1; display: flex; flex-direction: column; }
.list-body { flex: 1; display: flex; flex-direction: column; gap: 4px; padding: 7px; }
.box { border: 1px solid #cfcfcf; border-radius: 4px; background: #f3f3f3; }
.filters { display: flex; gap: 5px; }
.filters .box { display: flex; align-items: center; height: 44px; }
.field {
  width: 100%;
  height: 27px;
  padding: 0 4px;
  border: 1px solid #e2e2e2;
  border-bottom-color: #8c8c8c;
  border-radius: 4px;
  background: #fff;
  outline: 0;
  appearance: none;
}
.searchbox { position: relative; flex: 1; gap: 6px; padding: 0 6px 0 19px; }
.searchbox > svg { width: 22px; height: 22px; }
.searchbox .field { padding-left: 3px; }
.searchbox .field::placeholder { color: #bdbdbd; opacity: 1; }
.searchbox .glass { position: absolute; right: 12px; width: 13px; height: 13px; }
.white {
  flex: 1;
  display: flex;
  align-items: center;
  justify-content: center;
  border: 1px solid #e2e2e2;
  border-bottom-color: #cfcfcf;
  border-radius: 4px;
  background: #fff;
}
.exports { width: 373px; gap: 4px; padding: 0 3px 0 4px; }
.exports button { height: 34px; }
.exports svg { width: 22px; height: 22px; }
.csv-text { font: bold 6px Inter, sans-serif; fill: #fff; }
.perpage { width: 270px; gap: 5px; padding: 0 7px; white-space: nowrap; font-size: 15px; }
.perpage select { font-size: 17px; padding-left: 3px; }
.select { position: relative; flex: 1; }
.select > svg { position: absolute; right: 6px; top: 10px; width: 10px; height: 7px; }

.grid-box { flex: 1; display: flex; padding: 7px; }
.grid { flex: 1; border: 1px solid #cfcfcf; background: #fff; }
table { width: 100%; table-layout: fixed; border-collapse: collapse; }
.c-date { width: 163px; }
.c-edit { width: 65px; }
.c-del { width: 86px; }
th, td { height: 31px; padding: 0 4px; border-bottom: 1px solid #e2e2e2; line-height: 20px; text-align: left; font-size: 15px; }
th { background: #fafafa; padding-left: 5px; font-size: 17px; }
th:nth-child(n+3), td:nth-child(n+3) { border-left: 1px solid #e2e2e2; padding-left: 5px; }
.num, .date { font: bold 16px/20px "DejaVu Sans Condensed", sans-serif; }
.num { text-align: right; }
.filter td { border-bottom: 0; padding-left: 3px; }
.filter i { display: block; width: 10px; height: 4px; margin-left: 1px; border: 1px solid #444; border-width: 1px 0; }
.focused td { background: #e5e5e5; }
.focused td:first-child { color: #fff; }
.alt td { height: 30px; background: #f3f3f3; }
.selected td { background: #1abc9c; color: #fff; }
.cmd button { display: block; margin: auto; }
.cmd svg { width: 10px; height: 10px; fill: none; stroke: #222; stroke-width: 1.2; }
.cmd .go { width: 6px; }

.pager { display: flex; gap: 4px; height: 55px; padding: 7px 7px 0; border-bottom: 0; border-radius: 4px 4px 0 0; font-size: 15px; }
.pager button { display: flex; align-items: center; justify-content: center; width: 90px; height: 34px; border: 1px solid #e2e2e2; border-radius: 4px; }
.pager button:last-child { width: 92px; }
.pager svg { width: 19px; height: 20px; fill: #8f8f8f; }
.pager .w24 { width: 24px; }
.pager output { flex: 1; height: 35px; border: 1px solid #e2e2e2; border-bottom-color: #cfcfcf; border-radius: 4px; background: #fff; text-align: center; line-height: 32px; }
.flip { transform: scaleX(-1); }

/* Position editor window */
.modal {
  position: fixed;
  top: 340px;
  left: 0;
  right: 0;
  width: 448px;
  margin: 0 auto;
  padding: 7px;
  border: 0;
  background: #fff;
  color: #222;
  font-size: 13px;
  line-height: 18px;
  box-shadow: 0 20px 36px rgba(0, 0, 0, .38), 0 2px 20px rgba(0, 0, 0, .22);
}
.modal-top { display: flex; justify-content: space-between; height: 45px; padding: 7px; margin-bottom: 4px; }
.ok { display: flex; align-items: center; justify-content: center; width: 89px; height: 29px; border: 2px solid #0067c0; border-radius: 3px; background: #2980b9; }
.ok svg { width: 19px; height: 19px; }
.modal .cancel { flex: none; width: 59px; height: 29px; }
.cancel svg { width: 21px; height: 21px; }
.card > h2, .card > h3 { height: 21px; padding-left: 12px; border-radius: 4px 4px 0 0; background: #006666; color: #fff; line-height: 21px; }
.card > .big-head { font-size: 14px; }
.card-body { padding: 7px; border: 1px solid #cfcfcf; border-top: 0; border-radius: 0 0 4px 4px; background: #f3f3f3; }
.lookup { display: flex; align-items: center; gap: 6px; height: 40px; padding: 0 7px; }
.modal .field { display: block; height: 23px; padding: 0 3px; }
.modal .select > svg { top: 8px; }
fieldset { min-width: 0; margin: 2px 0 4px; padding: 3px 7px 6px; border: 1px solid #006666; border-radius: 4px; }
legend { padding: 0 5px; line-height: 18px; }
fieldset label { display: block; height: 22px; line-height: 22px; }
fieldset .select { height: 23px; }
.modal .salary { text-align: right; padding-right: 23px; }
.modal .select > .spin { top: 4px; height: 14px; }
.bottom { display: flex; gap: 4px; }
.nav { flex: 1; }
.acts { width: 157px; }
.row { display: flex; gap: 4px; }
.row button { flex: 1; display: flex; align-items: center; justify-content: center; height: 61px; border-radius: 4px; }
.row svg { width: 17px; height: 17px; fill: #0078d4; }
.row .w24 { width: 20px; }
.row .dark svg { fill: #1560c8; }
.acts .row svg { width: 20px; height: 20px; }
.new { background: #f39c12; }
.save { background: #27ae60; }
```
